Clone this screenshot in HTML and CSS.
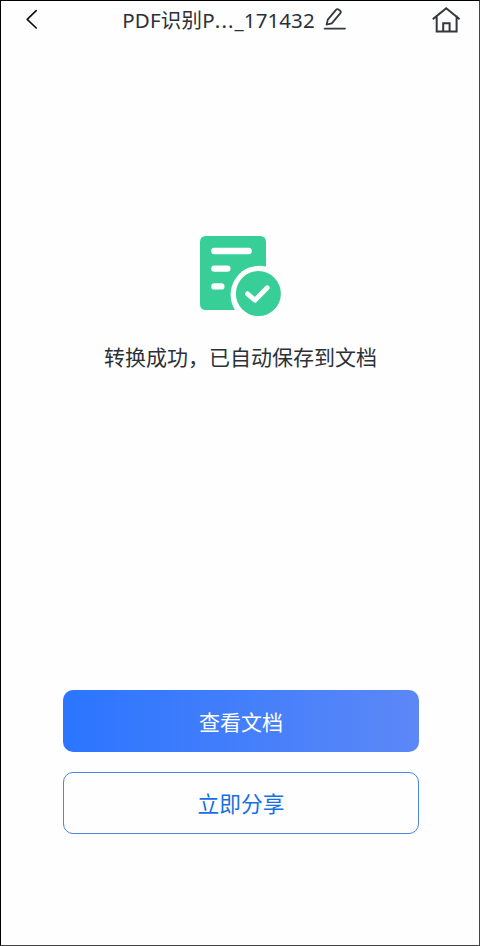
FILE: index.html
```html
<!DOCTYPE html>
<html lang="zh-CN">
<head>
<meta charset="utf-8">
<title>PDF识别</title>
<link rel="stylesheet" href="styles.css">
</head>
<body>
<div class="screen">
  <header class="bar">
    <svg class="back" width="14" height="22" viewBox="0 0 14 22"><path d="M11.2 1.6 2.2 10.4l9 8.6"/></svg>
    <div class="heading">
      <h1 class="name"><span class="prefix">PDF识别P</span><span class="dots">...</span><span class="stamp">_171432</span></h1>
      <svg class="edit" width="24" height="24" viewBox="0 0 24 24"><path d="M3.6 16.6 4.8 11.6 13 1.8Q14.2 .6 15.6 1.6L17.2 2.8Q18.4 3.8 17.4 5.2L8.8 15.4Z M1.6 20.6H22"/></svg>
    </div>
    <svg class="home" width="30" height="28" viewBox="0 0 30 28"><path d="M2.6 12.6 15.2 2.2 27.8 12.6M5.7 10.6V25.5H25.6V10.6M12.2 25.5V17.2H18.6V25.5"/></svg>
  </header>
  <main class="result">
    <svg class="success" width="84" height="84" viewBox="0 0 84 84">
      <path class="fill" d="M8 2H62Q68 2 68 8V32.4A29 29 0 0 0 37 76H8Q2 76 2 70V8Q2 2 8 2Z"/>
      <path class="lines" d="M16.4 17H50.6M16.4 34.6H29.4M16.4 52.4H23.3"/>
      <circle class="fill" cx="60.4" cy="59.6" r="22.5"/>
      <path class="check" d="M49.5 59.9 56.9 66.3 69.2 53.8"/>
    </svg>
    <p class="message">转换成功，已自动保存到文档</p>
  </main>
  <div class="actions">
    <button class="button primary">查看文档</button>
    <button class="button secondary">立即分享</button>
  </div>
</div>
</body>
</html>
```
FILE: styles.css
```css
* { box-sizing: border-box; }
body { margin: 0; }
.screen {
  width: 480px;
  height: 946px;
  display: flex;
  flex-direction: column;
  background: #fefefe;
  border: 1px solid #000;
  border-right-color: #444;
  border-bottom-color: #444;
  font-family: "Noto Sans", "Noto Sans CJK SC", sans-serif;
  color: #2c3138;
}
svg { display: block; fill: none; stroke: #33373e; stroke-linecap: round; stroke-linejoin: round; }
.bar {
  height: 38px;
  padding: 0 18px 0 24px;
  display: flex;
  justify-content: space-between;
  align-items: center;
}
.back { stroke: #111; stroke-width: 1.7; }
.heading { display: flex; align-items: center; gap: 8px; margin-right: 1px; }
.name { margin: 0; padding-bottom: 1px; font-size: 20.5px; line-height: 28px; font-weight: 400; white-space: nowrap; }
.prefix { letter-spacing: .2px; }
.dots { letter-spacing: 1.1px; }
.stamp { letter-spacing: .1px; }
.edit { stroke-width: 1.8; }
.home { stroke-width: 2; stroke-linecap: square; stroke-linejoin: miter; }
.result { flex: 1; padding-top: 195px; display: flex; flex-direction: column; align-items: center; }
.success { stroke: none; }
.success .fill { fill: #37ce97; }
.success .lines { stroke: #fff; stroke-width: 6.4; }
.success .check { stroke: #fff; stroke-width: 4.8; }
.message { margin: 23px 0 0 1px; font-family: "Noto Sans CJK SC", sans-serif; font-size: 21px; line-height: 30px; }
.actions { padding: 0 60px 111px 62px; display: flex; flex-direction: column; gap: 20px; }
.button { height: 62px; padding: 0 0 1px; border-radius: 10px; font-family: "Noto Sans CJK SC", sans-serif; font-size: 21px; }
.primary { border: 0; background: linear-gradient(90deg, #2b75ff, #5c88f7); color: #fff; }
.secondary { border: 1px solid #4c82e4; background: #fefefe; color: #176fe3; font-size: 21.7px; }
```
